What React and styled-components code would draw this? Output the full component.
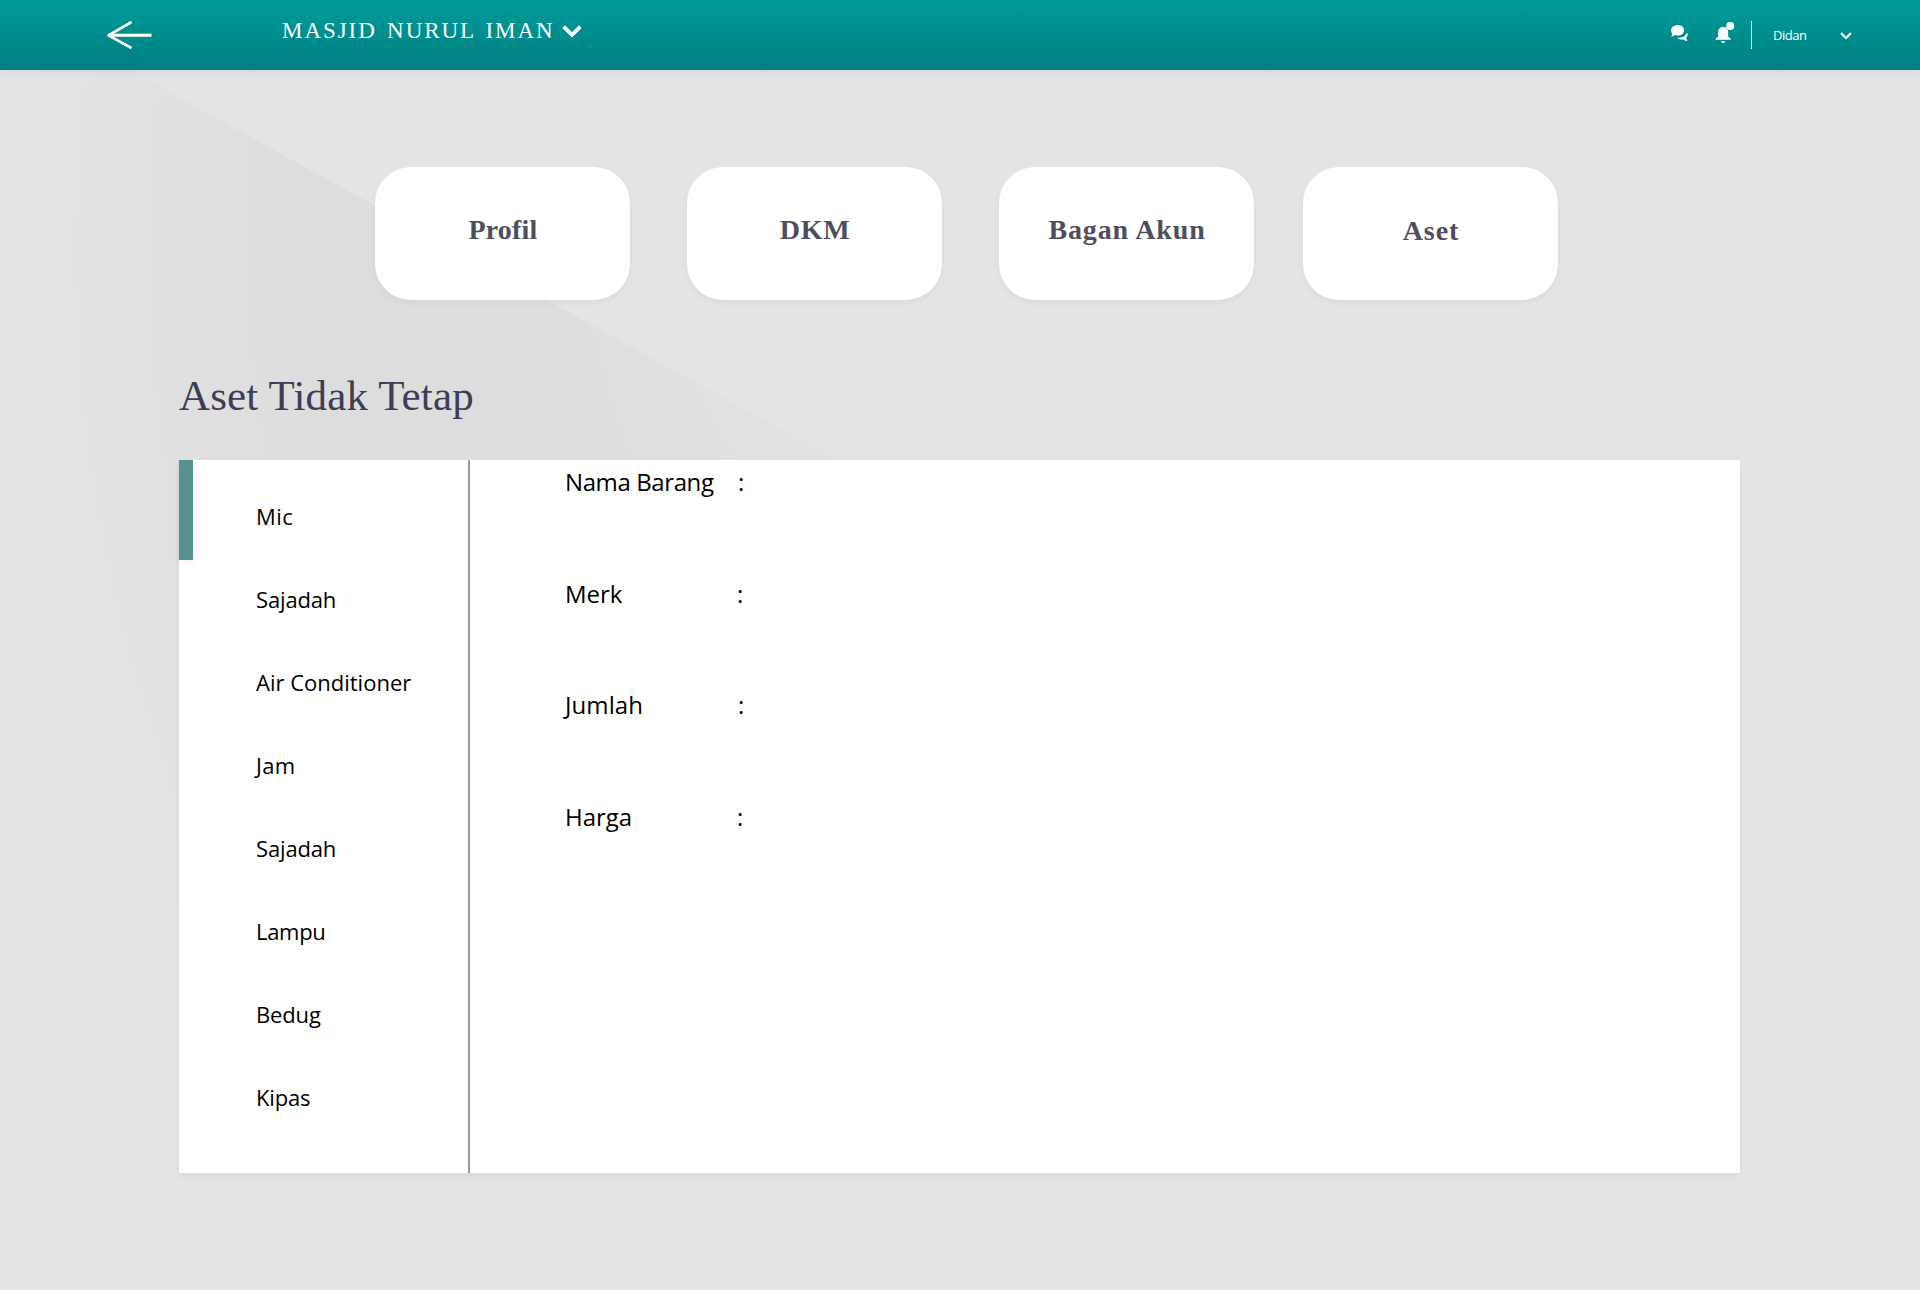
import React from "react";
import styled, { createGlobalStyle } from "styled-components";

const sans = `"Open Sans", "Noto Sans", sans-serif`;
const serif = `"Liberation Serif", serif`;

const GlobalStyle = createGlobalStyle`
  *, *::before { box-sizing: border-box; }
  body { margin: 0; background: #e4e4e4; font-family: ${sans}; }
  h1, h2, ul, dl, dt, dd { margin: 0; padding: 0; font-weight: 400; }
`;

const Page = styled.div`
  position: relative;
  isolation: isolate;
  display: flex;
  flex-direction: column;
  min-height: 1290px;
  overflow: hidden;

  &::before {
    content: "";
    position: absolute;
    inset: 0;
    z-index: -1;
    background: radial-gradient(
      ellipse 865px 1190px at 898px 250px,
      #e4e4e4 10%,
      #dedede 38%,
      #dddddd 66%,
      #e0e0e0 84%,
      #e4e4e4 100%
    );
    clip-path: polygon(0 0, 2px 0, 1920px 1057px, 1920px 1170px, 0 1170px);
  }
`;

const TopBar = styled.header`
  display: flex;
  align-items: flex-start;
  height: 70px;
  padding: 0 68px 0 106px;
  color: #fff;
  background: linear-gradient(#009b9b, #008080);
  box-shadow: 0 2px 6px rgba(0, 0, 0, 0.06);
`;

const IconButton = styled.button`
  display: flex;
  padding: 0;
  border: 0;
  color: inherit;
  background: none;
  margin-top: ${(p) => p.$top}px;
  margin-right: ${(p) => p.$right || 0}px;
`;

const Brand = styled.h1`
  width: 273px;
  margin: 18px 7px 0 130px;
  font: 400 23px/26px ${serif};
  letter-spacing: 1.95px;
  word-spacing: 2.6px;
  white-space: nowrap;
`;

const Actions = styled.div`
  display: flex;
  align-items: flex-start;
  margin-left: auto;
`;

const Divider = styled.span`
  width: 1px;
  height: 28px;
  margin: 21px 21px 0 0;
  background: #fff;
`;

const UserName = styled.span`
  width: 67px;
  margin-top: 26px;
  font-size: 13px;
  line-height: 18px;
  letter-spacing: -0.45px;
`;

const Tabs = styled.nav`
  display: grid;
  grid-template-columns: 255px 255px 255px 255px;
  column-gap: 57px;
  margin: 97px 0 0 375px;
`;

const Tab = styled.button`
  height: 133px;
  margin-left: ${(p) => p.$shift || 0}px;
  width: 255px;
  padding: ${(p) => p.$drop || 0}px 0 7px 1px;
  border: 0;
  border-radius: 36px;
  color: #4f4e5e;
  background: #fff;
  box-shadow: 0 3px 6px rgba(0, 0, 0, 0.04);
  font: 700 28px/32px ${serif};
  letter-spacing: ${(p) => p.$track}px;
`;

const Heading = styled.h2`
  margin: 71px 0 0 179px;
  color: #3f3d56;
  font: 400 43px/50px ${serif};
  letter-spacing: 0.15px;
`;

const Panel = styled.main`
  display: flex;
  width: 1561px;
  height: 713px;
  margin: 39px 0 0 179px;
  background: #fff;
  box-shadow: 0 3px 6px rgba(0, 0, 0, 0.05);
`;

const Marker = styled.span`
  width: 14px;
  height: 100px;
  background: #559190;
  box-shadow: 0 3px 6px rgba(0, 0, 0, 0.05);
`;

const AssetList = styled.ul`
  display: flex;
  flex-direction: column;
  gap: 53px;
  width: 277px;
  padding: 41px 0 0 63px;
  border-right: 2px solid #9b9b9b;
  list-style: none;
`;

const AssetItem = styled.li`
  color: #000;
  font-size: 22px;
  line-height: 30px;
  letter-spacing: ${(p) => p.$track ?? -0.15}px;
`;

const Details = styled.dl`
  display: flex;
  flex-direction: column;
  gap: 77.7px;
  padding: 5px 0 0 95px;
`;

const Field = styled.div`
  display: grid;
  grid-template-columns: ${(p) => p.$label}px auto;
  color: #000;
  font-size: 24px;
  line-height: 34px;
`;

const FieldLabel = styled.dt`
  letter-spacing: ${(p) => p.$track}px;
`;

const tabs = [
  { label: "Profil", track: 0.2 },
  { label: "DKM", track: 0.7 },
  { label: "Bagan Akun", track: 0.85 },
  { label: "Aset", track: 0.9, shift: -8, drop: 2 },
];

const assets = [
  { name: "Mic", track: 0.4 },
  { name: "Sajadah" },
  { name: "Air Conditioner", track: 0 },
  { name: "Jam", track: 0.3 },
  { name: "Sajadah" },
  { name: "Lampu", track: -0.3 },
  { name: "Bedug" },
  { name: "Kipas" },
];

const fields = [
  { label: "Nama Barang", track: -0.4, width: 173 },
  { label: "Merk", track: 0, width: 172 },
  { label: "Jumlah", track: 0.1, width: 173 },
  { label: "Harga", track: 0, width: 172 },
];

const BackArrow = () => (
  <svg width="46" height="30" viewBox="0 0 46 30" fill="none" stroke="#fff">
    <path d="M45.5 15.3H2" strokeWidth="2.9" />
    <path d="M25.5 2L2.5 15.3L25.5 28" strokeWidth="2.6" strokeLinejoin="round" />
  </svg>
);

const Chevron = ({ width, height, stroke }) => (
  <svg width={width} height={height} viewBox="0 0 20 13" fill="none" stroke="#fff">
    <path d="M1.7 1.7L10 9.8L18.3 1.7" strokeWidth={stroke} />
  </svg>
);

const ChatIcon = () => (
  <svg width="17" height="17" viewBox="0 0 17 17" fill="#fff">
    <path d="M6.8 0C10.4 0 13.1 2.3 13.1 5.2S10.4 10.5 6.8 10.5C5.8 10.5 4.9 10.4 4.1 10.1C3 11 1.6 11.6 0.2 11.7C0.8 10.8 1.1 9.8 1 8.5C0.4 7.5 0.1 6.4 0.1 5.2C0.1 2.3 3.2 0 6.8 0Z" />
    <path d="M16.6 8.4C16.9 10 16.4 11.4 15.2 12.6C15.3 14 15.8 15.1 16.4 16C14.7 15.9 13.3 15.3 12.2 14.4C9.9 14.7 8 14.3 6.3 12.9C11.2 12.8 14.5 11.5 15.4 8.3Z" />
  </svg>
);

const BellIcon = () => (
  <svg width="20" height="22" viewBox="0 0 20 22" fill="#fff">
    <path d="M8 5C4.9 5 3.2 7.2 3.2 10V14.2C3.2 15.3 0.3 16 0.3 17.8H16C16 16 13.1 15.3 13.1 14.2V10C13.1 7.2 11.2 5 8 5Z" />
    <path d="M6 19H10.2C10 20.3 9.2 21 8.1 21S6.2 20.3 6 19Z" />
    <circle cx="15.2" cy="4" r="4" />
  </svg>
);

export default function App() {
  return (
    <Page>
      <GlobalStyle />
      <TopBar>
        <IconButton $top={20} aria-label="Kembali">
          <BackArrow />
        </IconButton>
        <Brand>MASJID NURUL IMAN</Brand>
        <IconButton $top={25} aria-label="Pilih masjid">
          <Chevron width={20} height={13} stroke={3.8} />
        </IconButton>
        <Actions>
          <IconButton $top={25} $right={27} aria-label="Pesan">
            <ChatIcon />
          </IconButton>
          <IconButton $top={22} $right={16} aria-label="Notifikasi">
            <BellIcon />
          </IconButton>
          <Divider />
          <UserName>Didan</UserName>
          <IconButton $top={32} aria-label="Menu akun">
            <Chevron width={12} height={8} stroke={3.6} />
          </IconButton>
        </Actions>
      </TopBar>
      <Tabs>
        {tabs.map((t) => (
          <Tab key={t.label} $track={t.track} $shift={t.shift} $drop={t.drop}>
            {t.label}
          </Tab>
        ))}
      </Tabs>
      <Heading>Aset Tidak Tetap</Heading>
      <Panel>
        <Marker />
        <AssetList>
          {assets.map((a, i) => (
            <AssetItem key={i} $track={a.track}>
              {a.name}
            </AssetItem>
          ))}
        </AssetList>
        <Details>
          {fields.map((f) => (
            <Field key={f.label} $label={f.width}>
              <FieldLabel $track={f.track}>{f.label}</FieldLabel>
              <dd>:</dd>
            </Field>
          ))}
        </Details>
      </Panel>
    </Page>
  );
}
